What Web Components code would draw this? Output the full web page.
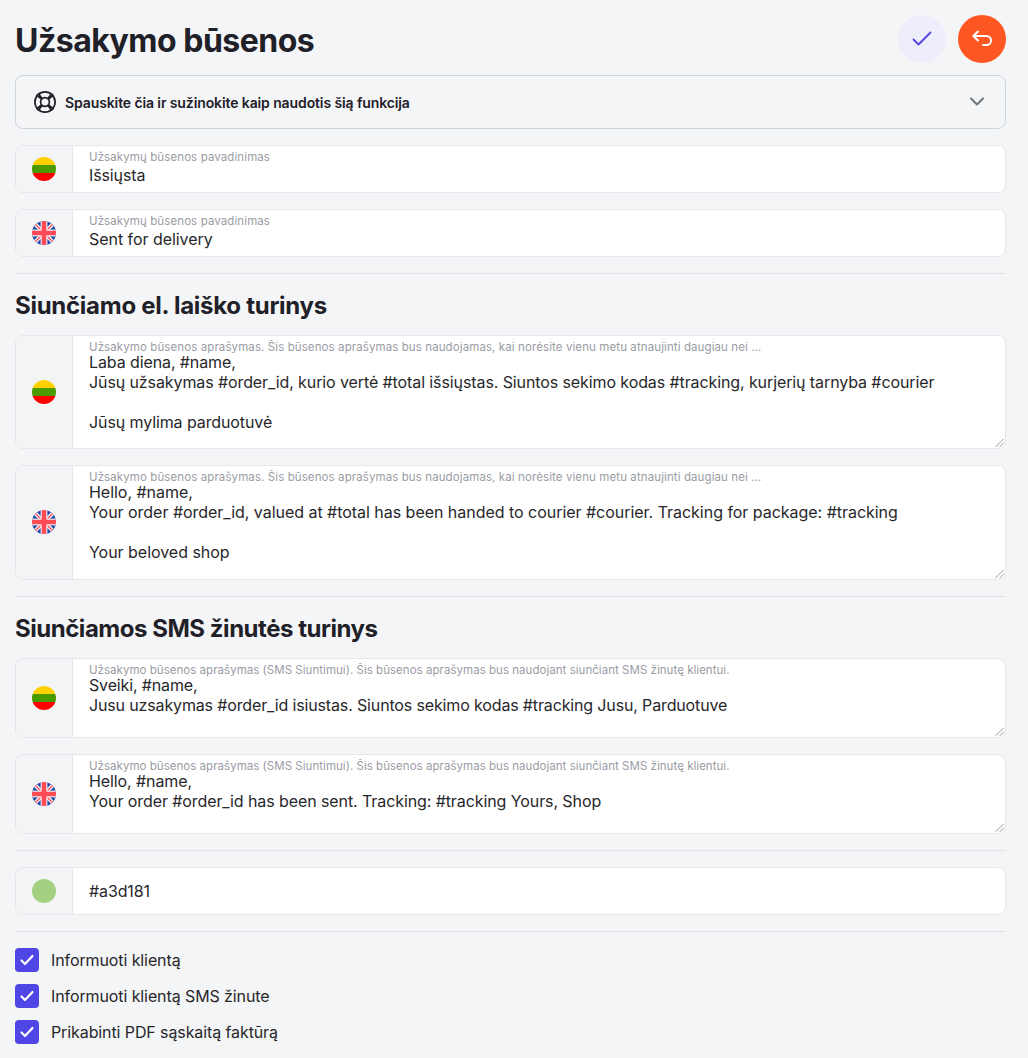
<!DOCTYPE html>
<html lang="lt">
<head>
<meta charset="utf-8">
<title>Užsakymo būsenos</title>
<style>
    html,body{margin:0;padding:0;background:#f4f5f7;}
    body{font-family:"Inter","Noto Sans",sans-serif;color:#27272a;}
</style>
</head>
<body>
<template id="tpl-flag-lt">
    <svg width="24" height="24" viewBox="0 0 24 24"><defs><clipPath id="c"><circle cx="12" cy="12" r="12"/></clipPath></defs><g clip-path="url(#c)"><rect width="24" height="8" fill="#ffd100"/><rect y="8" width="24" height="8" fill="#4a9a00"/><rect y="16" width="24" height="8" fill="#f00"/></g></svg>
</template>
<template id="tpl-flag-en">
    <svg width="24" height="24" viewBox="0 0 24 24"><defs><clipPath id="c"><circle cx="12" cy="12" r="12"/></clipPath></defs><g clip-path="url(#c)"><rect width="24" height="24" fill="#1f4aa8"/><path d="M0 0l24 24M24 0L0 24" stroke="#f5f5f5" stroke-width="3.8"/><path d="M0 0l24 24M24 0L0 24" stroke="#ff4b55" stroke-width="1.3"/><rect x="8.6" width="6.8" height="24" fill="#f5f5f5"/><rect y="8.6" width="24" height="6.8" fill="#f5f5f5"/><rect x="9.7" width="4.6" height="24" fill="#ff4b55"/><rect y="9.7" width="24" height="4.6" fill="#ff4b55"/></g></svg>
</template>
<template id="tpl-flag-color">
    <svg width="24" height="24" viewBox="0 0 24 24"><circle cx="12" cy="12" r="12" fill="#a3d181"/></svg>
</template>

<status-page></status-page>

<script>
class IconButton extends HTMLElement {
    constructor() {
        super();
        this.attachShadow({ mode: 'open' });
        this.shadowRoot.innerHTML = `
            <style>
                :host{display:flex;width:48px;height:48px;border-radius:50%;align-items:center;justify-content:center;background:var(--bg);color:var(--fg);cursor:pointer;}
            </style>
            <slot></slot>`;
    }
}
customElements.define('icon-button', IconButton);

class HelpBar extends HTMLElement {
    constructor() {
        super();
        this.attachShadow({ mode: 'open' });
        this.shadowRoot.innerHTML = `
            <style>
                :host{display:flex;align-items:center;height:54px;box-sizing:border-box;border:1px solid #d1d5db;border-radius:8px;padding:0 17px;gap:8px;font-size:14px;font-weight:600;color:#1f2028;letter-spacing:-0.11px;}
                .t{flex:1;}
                svg{display:block;flex:none;}
            </style>
            <svg width="24" height="24" viewBox="0 0 24 24" fill="none" stroke="#1f2028" stroke-width="1.7" stroke-linecap="round"><circle cx="12" cy="12" r="10.1"/><circle cx="12" cy="12" r="4.4"/><path d="M5.4 3.8l3.7 4.7M3.8 5.4l4.7 3.7M18.6 3.8l-3.7 4.7M20.2 5.4l-4.7 3.7M5.4 20.2l3.7-4.7M3.8 18.6l4.7-3.7M18.6 20.2l-3.7-4.7M20.2 18.6l-4.7-3.7"/></svg>
            <span class="t"><slot></slot></span>
            <svg width="20" height="20" viewBox="0 0 20 20" fill="none" stroke="#6b7280" stroke-width="2" stroke-linecap="round" stroke-linejoin="round" style="margin-right:1px"><path d="M4 6.5l6 6 6-6"/></svg>`;
    }
}
customElements.define('help-bar', HelpBar);

class StatusField extends HTMLElement {
    constructor() {
        super();
        this.attachShadow({ mode: 'open' });
    }
    connectedCallback() {
        var flag = this.getAttribute('flag');
        var label = this.getAttribute('label');
        var multi = this.hasAttribute('multi');
        var h = Number(this.getAttribute('height') || 48);
        this.shadowRoot.innerHTML = `
            <style>
                :host{display:flex;height:${h}px;box-sizing:border-box;border:1px solid #e5e7eb;border-radius:8px;overflow:hidden;background:#fff;position:relative;}
                .addon{flex:none;width:57px;background:#f3f4f6;border-right:1px solid #e5e7eb;display:flex;align-items:center;justify-content:center;box-sizing:border-box;padding-right:1px;padding-bottom:${h % 2}px;}
                .addon svg{display:block;}
                .main{flex:1;min-width:0;padding:${label ? 4 : 0}px 16px 0;display:flex;flex-direction:column;justify-content:${label ? 'flex-start' : 'center'};}
                .label{font-size:11.5px;line-height:14px;letter-spacing:var(--label-ls,0.1px);color:#9a9ca5;white-space:nowrap;overflow:hidden;text-overflow:ellipsis;padding-right:226px;}
                .value{font-size:16px;line-height:20px;color:#27272a;white-space:pre-wrap;letter-spacing:var(--value-ls,-0.11px);margin-top:${multi ? -2 : (label ? 1 : 0)}px;}
                .grip{position:absolute;right:1px;bottom:1px;display:block;}
            </style>
            <div class="addon"></div>
            <div class="main">
                ${label ? '<div class="label"></div>' : ''}
                <div class="value"><slot></slot></div>
            </div>
            ${multi ? '<svg class="grip" width="9" height="9" viewBox="0 0 9 9" stroke="#555" stroke-width="1" stroke-dasharray="1 .5"><path d="M1 8.5L8.5 1M5 8.5L8.5 5"/></svg>' : ''}`;
        if (label) this.shadowRoot.querySelector('.label').textContent = label;
        this.shadowRoot.querySelector('.addon').appendChild(document.getElementById('tpl-flag-' + flag).content.cloneNode(true));
    }
}
customElements.define('status-field', StatusField);

class CheckRow extends HTMLElement {
    constructor() {
        super();
        this.attachShadow({ mode: 'open' });
        this.shadowRoot.innerHTML = `
            <style>
                :host{display:flex;align-items:center;gap:12px;height:24px;font-size:16px;letter-spacing:-0.1px;color:#27272a;}
                .box{width:24px;height:24px;border-radius:4px;background:#4f46e5;display:flex;align-items:center;justify-content:center;flex:none;}
            </style>
            <span class="box"><svg width="16" height="16" viewBox="0 0 16 16" fill="none" stroke="#fff" stroke-width="2.2" stroke-linecap="round" stroke-linejoin="round"><path d="M2.5 8.5L6 12l7.5-8"/></svg></span>
            <span><slot></slot></span>`;
    }
}
customElements.define('check-row', CheckRow);

class SectionTitle extends HTMLElement {
    constructor() {
        super();
        this.attachShadow({ mode: 'open' });
        this.shadowRoot.innerHTML = `
            <style>
                :host{display:block;font-size:24px;line-height:30px;font-weight:700;color:#1f2028;margin:1px 0 -2px;letter-spacing:var(--ls,-0.27px);}
            </style>
            <slot></slot>`;
    }
}
customElements.define('section-title', SectionTitle);

class StatusPage extends HTMLElement {
    constructor() {
        super();
        this.attachShadow({ mode: 'open' });
        this.shadowRoot.innerHTML = `
            <style>
                :host{display:block;box-sizing:border-box;width:1028px;height:1058px;overflow:hidden;padding:15px 22px 0 15px;}
                header{display:flex;align-items:center;height:48px;gap:12px;margin-bottom:12px;}
                h1{flex:1;margin:0;padding-top:4px;font-size:32px;line-height:48px;font-weight:700;color:#1f2028;letter-spacing:-0.5px;}
                .stack{display:flex;flex-direction:column;gap:16px;}
                hr{border:0;border-top:1px solid #e0e2e6;margin:0;}
                .checks{display:flex;flex-direction:column;gap:12px;}
            </style>
            <header>
                <h1>Užsakymo būsenos</h1>
                <icon-button style="--bg:#eeedfb;--fg:#4f46e5">
                    <svg width="24" height="24" viewBox="0 0 24 24" fill="none" stroke="currentColor" stroke-width="1.8" stroke-linecap="round" stroke-linejoin="round"><path d="M3.5 12.5l5 5 12-12"/></svg>
                </icon-button>
                <icon-button style="--bg:#ff5722;--fg:#fff">
                    <svg width="24" height="24" viewBox="0 0 24 24" fill="none" stroke="currentColor" stroke-width="2" stroke-linecap="round" stroke-linejoin="round"><path d="M8 4.5L3.3 9 8 13.5M3.3 9h13.2a4.5 4.5 0 0 1 0 9H13"/></svg>
                </icon-button>
            </header>
            <div class="stack">
                <help-bar>Spauskite čia ir sužinokite kaip naudotis šią funkcija</help-bar>
                <status-field flag="lt" label="Užsakymų būsenos pavadinimas">Išsiųsta</status-field>
                <status-field flag="en" style="--value-ls:-0.05px" label="Užsakymų būsenos pavadinimas">Sent for delivery</status-field>
                <hr>
                <section-title>Siunčiamo el. laiško turinys</section-title>
                <status-field flag="lt" style="--value-ls:-0.1px" multi height="114" label="Užsakymo būsenos aprašymas. Šis būsenos aprašymas bus naudojamas, kai norėsite vienu metu atnaujinti daugiau nei vieno užsakymo būseną">Laba diena, #name,
Jūsų užsakymas #order_id, kurio vertė #total išsiųstas. Siuntos sekimo kodas #tracking, kurjerių tarnyba #courier

Jūsų mylima parduotuvė</status-field>
                <status-field flag="en" style="--value-ls:-0.03px" multi height="115" label="Užsakymo būsenos aprašymas. Šis būsenos aprašymas bus naudojamas, kai norėsite vienu metu atnaujinti daugiau nei vieno užsakymo būseną">Hello, #name,
Your order #order_id, valued at #total has been handed to courier #courier. Tracking for package: #tracking

Your beloved shop</status-field>
                <hr>
                <section-title style="--ls:-0.47px">Siunčiamos SMS žinutės turinys</section-title>
                <status-field flag="lt" style="--value-ls:-0.145px;--label-ls:0.035px" multi height="80" label="Užsakymo būsenos aprašymas (SMS Siuntimui). Šis būsenos aprašymas bus naudojant siunčiant SMS žinutę klientui.">Sveiki, #name,
Jusu uzsakymas #order_id isiustas. Siuntos sekimo kodas #tracking Jusu, Parduotuve</status-field>
                <status-field flag="en" style="--value-ls:-0.09px;--label-ls:0.035px" multi height="80" label="Užsakymo būsenos aprašymas (SMS Siuntimui). Šis būsenos aprašymas bus naudojant siunčiant SMS žinutę klientui.">Hello, #name,
Your order #order_id has been sent. Tracking: #tracking Yours, Shop</status-field>
                <hr>
                <status-field flag="color">#a3d181</status-field>
                <hr>
                <div class="checks">
                    <check-row>Informuoti klientą</check-row>
                    <check-row>Informuoti klientą SMS žinute</check-row>
                    <check-row>Prikabinti PDF sąskaitą faktūrą</check-row>
                </div>
            </div>`;
    }
}
customElements.define('status-page', StatusPage);
</script>
</body>
</html>
